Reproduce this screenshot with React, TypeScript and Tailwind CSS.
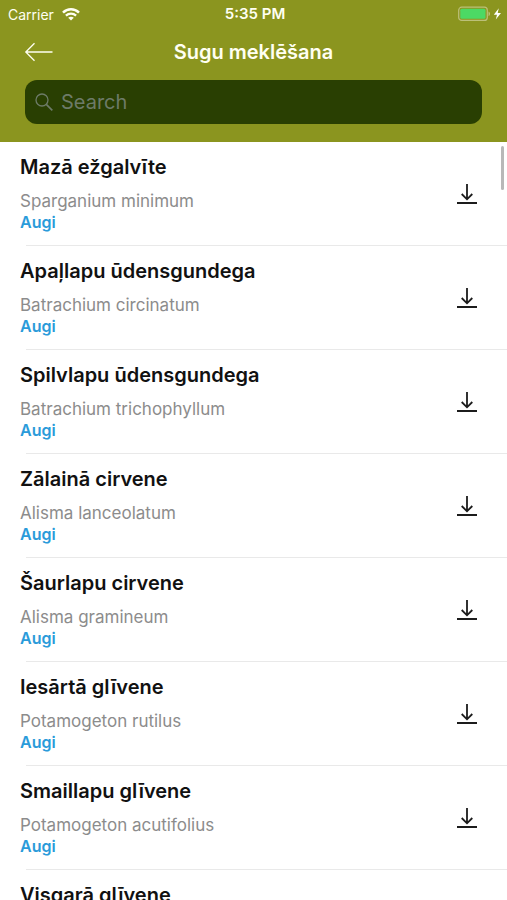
type Species = { name: string; latin?: string; group?: string };

const species: Species[] = [
  { name: "Mazā ežgalvīte", latin: "Sparganium minimum", group: "Augi" },
  { name: "Apaļlapu ūdensgundega", latin: "Batrachium circinatum", group: "Augi" },
  { name: "Spilvlapu ūdensgundega", latin: "Batrachium trichophyllum", group: "Augi" },
  { name: "Zālainā cirvene", latin: "Alisma lanceolatum", group: "Augi" },
  { name: "Šaurlapu cirvene", latin: "Alisma gramineum", group: "Augi" },
  { name: "Iesārtā glīvene", latin: "Potamogeton rutilus", group: "Augi" },
  { name: "Smaillapu glīvene", latin: "Potamogeton acutifolius", group: "Augi" },
  { name: "Visgarā glīvene" },
];

function WifiIcon() {
  return (
    <svg width="18" height="13" viewBox="0 0 18 13" fill="none" aria-hidden="true">
      <path d="M1 4.600C5.500 .2 12.500 .2 17 4.600" stroke="currentColor" strokeWidth="2.500" />
      <path d="M3.900 7.600C6.800 4.900 11.200 4.900 14.100 7.600" stroke="currentColor" strokeWidth="2.300" />
      <path d="M9 12.600 6.200 9.800C7.700 8.400 10.300 8.400 11.800 9.800Z" fill="currentColor" />
    </svg>
  );
}

function BatteryIcon() {
  return (
    <svg width="44" height="16" viewBox="0 0 44 16" fill="none" aria-hidden="true">
      <rect x=".7" y="1.200" width="28.600" height="13.200" rx="3" stroke="#bcc079" strokeWidth="1.200" />
      <rect x="2.300" y="2.800" width="25.200" height="10" rx="1.500" fill="#4cd964" />
      <path d="M30.500 5.500c2 .8 2 3.800 0 4.600Z" fill="#bcc079" />
      <path d="M40.800 2.200 35.800 8.700h3.200L37.800 13.600 43 7h-3.300Z" fill="#fff" />
    </svg>
  );
}

function DownloadIcon() {
  return (
    <svg width="20" height="22" viewBox="0 0 20 22" fill="none" stroke="#1c1c1c" aria-hidden="true">
      <path d="M10 1v15M4.700 11 10 16.300 15.300 11" strokeWidth="1.800" />
      <path d="M0 20h20" strokeWidth="2" />
    </svg>
  );
}

function SpeciesRow({ item }: { item: Species }) {
  return (
    <li className="flex h-[104px] shrink-0 flex-col">
      <div className="flex flex-1 items-center justify-between pr-[30px] pl-5">
        <div className="min-w-0">
          <h2 className="text-[20px] leading-6 font-semibold text-[#111]">{item.name}</h2>
          <p className="mt-3 h-[21px] text-[17px] leading-[21px] text-[#8c8c8c]">{item.latin}</p>
          <p className="h-[21px] text-[16px] leading-[21px] font-semibold text-[#2a9bda]">{item.group}</p>
        </div>
        <button type="button" aria-label={`Lejupielādēt ${item.name}`} className="shrink-0">
          <DownloadIcon />
        </button>
      </div>
      <div className="ml-[26px] h-px bg-[#e9e9e9]" />
    </li>
  );
}

export default function App() {
  return (
    <div className="flex h-screen flex-col overflow-hidden bg-white font-['Inter','Liberation_Sans',sans-serif]">
      <header className="shrink-0 bg-[#8b951f] pb-[18px] text-[#fffff2]">
        <div className="grid h-7 grid-cols-[1fr_auto_1fr] items-center pr-[5px] pl-2">
          <div className="flex items-center gap-2 text-[14px]">
            <span>Carrier</span>
            <WifiIcon />
          </div>
          <span className="text-[15px] font-semibold">5:35 PM</span>
          <div className="flex justify-end">
            <BatteryIcon />
          </div>
        </div>
        <div className="mb-1 grid h-12 grid-cols-[1fr_auto_1fr] items-center px-6">
          <button type="button" aria-label="Atpakaļ" className="justify-self-start">
            <svg width="29" height="20" viewBox="0 0 29 20" fill="none" stroke="currentColor" strokeWidth="1.300" aria-hidden="true">
              <path d="M28.500 10H2M10.500 1.200 1.800 10l8.700 8.800" />
            </svg>
          </button>
          <h1 className="text-[20px] leading-6 font-semibold">Sugu meklēšana</h1>
        </div>
        <label className="mx-[25px] flex h-11 items-center gap-2 rounded-xl bg-[#293f02] px-[10px] text-[#6d7b68]">
          <svg width="18" height="18" viewBox="0 0 18 18" fill="none" stroke="currentColor" strokeWidth="1.300" className="shrink-0" aria-hidden="true">
            <circle cx="7" cy="7" r="6" />
            <path d="m11.300 11.300 6 6" strokeWidth="1.700" />
          </svg>
          <input
            type="text"
            placeholder="Search"
            aria-label="Search"
            className="min-w-0 flex-1 bg-transparent text-[20px] leading-6 text-white outline-none placeholder:text-[#6d7b68]"
          />
        </label>
      </header>
      <main className="relative min-h-0 flex-1 overflow-hidden">
        <ul className="flex flex-col">
          {species.map((item) => (
            <SpeciesRow key={item.name} item={item} />
          ))}
        </ul>
        <div className="absolute top-1 right-[3px] h-[44px] w-[3px] rounded-full bg-[#b8b8b8]" />
      </main>
    </div>
  );
}
